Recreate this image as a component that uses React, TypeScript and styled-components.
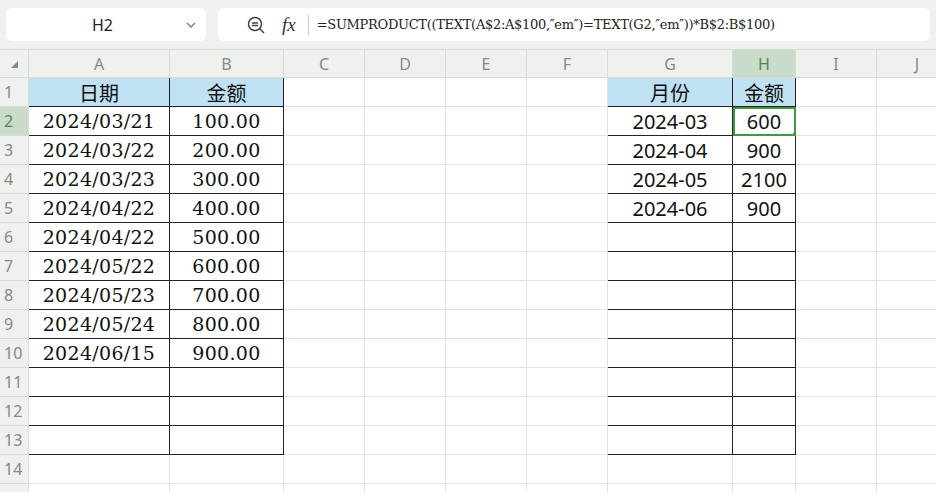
import React from 'react';
import styled, { createGlobalStyle } from 'styled-components';

const Global = createGlobalStyle`
  body { margin: 0; background: #fff; font-family: "Noto Sans", "Noto Sans CJK SC", sans-serif; overflow: hidden; }
`;

const cols = [29, 141, 114, 81, 81, 81, 81, 125, 63, 81, 81];
const letters = ['A', 'B', 'C', 'D', 'E', 'F', 'G', 'H', 'I', 'J'];

const Top = styled.div`
  height: 49px;
  background: #eef1ee;
  display: flex;
  align-items: center;
  gap: 12px;
  padding: 0 6px;
  border-bottom: 1px solid #d4dbd4;
`;
const NameBox = styled.div`
  width: 200px;
  height: 33px;
  background: #fff;
  border-radius: 6px;
  display: flex;
  align-items: center;
  justify-content: space-between;
  padding: 0 8px 0 86px;
  box-sizing: border-box;
  font-size: 16px;
  color: #222;
`;
const FormulaBox = styled.div`
  flex: 1;
  height: 33px;
  background: #fff;
  border-radius: 6px;
  display: flex;
  align-items: center;
  padding-left: 28px;
  gap: 16px;
  color: #333;
`;
const Fx = styled.span`
  font-family: "Liberation Serif", serif;
  font-style: italic;
  font-size: 19px;
`;
const Sep = styled.span`
  width: 1px;
  height: 20px;
  background: #ccc;
  margin-left: -4px;
`;
const Formula = styled.span`
  font-family: "DejaVu Serif", "Liberation Serif", serif;
  font-size: 13px;
  margin-left: -8px;
  letter-spacing: -0.3px;
  color: #222;
`;

const Grid = styled.div`
  display: grid;
  grid-template-columns: ${cols.map(c => c + 'px').join(' ')};
  grid-template-rows: 28px repeat(15, 29px);
`;
const ColHead = styled.div<{ $sel?: boolean }>`
  background: ${p => (p.$sel ? '#c9dcc9' : '#eef1ee')};
  color: ${p => (p.$sel ? '#4e8a4e' : '#888')};
  border-right: 1px solid #d6ddd6;
  border-bottom: 1px solid #d6ddd6;
  display: flex;
  align-items: center;
  justify-content: center;
  font-size: 16px;
`;
const RowHead = styled.div<{ $sel?: boolean }>`
  background: ${p => (p.$sel ? '#c9dcc9' : '#eef1ee')};
  color: ${p => (p.$sel ? '#4e8a4e' : '#888')};
  border-right: 1px solid #d6ddd6;
  border-bottom: 1px solid #d6ddd6;
  display: flex;
  align-items: center;
  padding-left: 4px;
  font-size: 16px;
`;
const Cell = styled.div<{ $bg?: string; $box?: boolean; $serif?: boolean; $sel?: boolean }>`
  position: relative;
  box-sizing: border-box;
  background: ${p => p.$bg || '#fff'};
  border-right: 1px solid ${p => (p.$box ? '#222' : '#dfe5df')};
  border-bottom: 1px solid ${p => (p.$box ? '#222' : '#dfe5df')};
  display: flex;
  align-items: center;
  justify-content: center;
  font-family: ${p => (p.$serif ? '"DejaVu Serif", "Noto Sans CJK SC", serif' : '"Noto Sans", "Noto Sans CJK SC", sans-serif')};
  font-size: ${p => (p.$serif ? '19px' : '20px')};
  letter-spacing: ${p => (p.$serif ? '0.3px' : '0')};
  color: #111;
  overflow: hidden;
  white-space: nowrap;
  ${p => p.$sel && 'outline: 2px solid #3f9a3f; outline-offset: -2px; overflow: visible;'}
`;
const Handle = styled.span`
  position: absolute;
  right: -3px;
  bottom: -3px;
  width: 5px;
  height: 5px;
  background: #3f9a3f;
`;

const left: [string, string][] = [
  ['2024/03/21', '100.00'], ['2024/03/22', '200.00'], ['2024/03/23', '300.00'],
  ['2024/04/22', '400.00'], ['2024/04/22', '500.00'], ['2024/05/22', '600.00'],
  ['2024/05/23', '700.00'], ['2024/05/24', '800.00'], ['2024/06/15', '900.00'],
];
const right: [string, string][] = [['2024-03', '600'], ['2024-04', '900'], ['2024-05', '2100'], ['2024-06', '900']];

export default function App() {
  const rows = [];
  for (let r = 1; r <= 15; r++) {
    rows.push(<RowHead key={'r' + r} $sel={r === 2}>{r}</RowHead>);
    letters.forEach(l => {
      const k = l + r;
      const inLeft = r <= 13 && (l === 'A' || l === 'B');
      const inRight = r <= 13 && (l === 'G' || l === 'H');
      let text = '';
      let bg: string | undefined;
      if (r === 1) {
        if (l === 'A') text = '日期';
        if (l === 'B' || l === 'H') text = '金额';
        if (l === 'G') text = '月份';
        if (inLeft || inRight) bg = '#bfe1f3';
      } else {
        const li = left[r - 2];
        const ri = right[r - 2];
        if (l === 'A' && li) text = li[0];
        if (l === 'B' && li) text = li[1];
        if (l === 'G' && ri) text = ri[0];
        if (l === 'H' && ri) text = ri[1];
      }
      rows.push(
        <Cell key={k} $bg={bg} $box={inLeft || inRight} $serif={inLeft && r > 1} $sel={k === 'H2'}>
          {text}
          {k === 'H2' && <Handle />}
        </Cell>
      );
    });
  }
  return (
    <>
      <Global />
      <Top>
        <NameBox>
          <span>H2</span>
          <svg width="14" height="14" viewBox="0 0 14 14"><path d="M3 5l4 4 4-4" fill="none" stroke="#777" strokeWidth="1.3" /></svg>
        </NameBox>
        <FormulaBox>
          <svg width="20" height="20" viewBox="0 0 20 20" fill="none" stroke="#444" strokeWidth="1.5">
            <circle cx="9" cy="9" r="6.5" />
            <path d="M6 8h6M6 10.5h6M14 14l4 4" />
          </svg>
          <Fx>fx</Fx>
          <Sep />
          <Formula>=SUMPRODUCT((TEXT(A$2:A$100,″em″)=TEXT(G2,″em″))*B$2:B$100)</Formula>
        </FormulaBox>
      </Top>
      <Grid>
        <ColHead>
          <svg width="10" height="10" viewBox="0 0 10 10"><path d="M9 2L9 9L2 9Z" fill="#888" /></svg>
        </ColHead>
        {letters.map(l => <ColHead key={l} $sel={l === 'H'}>{l}</ColHead>)}
        {rows}
      </Grid>
    </>
  );
}
